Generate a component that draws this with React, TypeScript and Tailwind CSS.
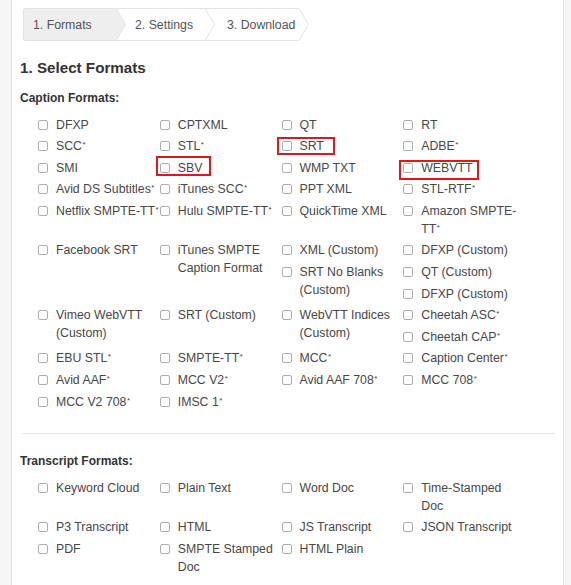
import React from "react";

type Hl = "sbv" | "srt" | "webvtt" | undefined;

const caption: [string, Hl?][] = [
  ["DFXP"], ["CPTXML"], ["QT"], ["RT"],
  ["SCC*"], ["STL*"], ["SRT", "srt"], ["ADBE*"],
  ["SMI"], ["SBV", "sbv"], ["WMP TXT"], ["WEBVTT", "webvtt"],
  ["Avid DS Subtitles*"], ["iTunes SCC*"], ["PPT XML"], ["STL-RTF*"],
  ["Netflix SMPTE-TT*"], ["Hulu SMPTE-TT*"], ["QuickTime XML"], ["Amazon SMPTE-\nTT*"],
  ["Facebook SRT"], ["iTunes SMPTE\nCaption Format"], ["XML (Custom)"], ["DFXP (Custom)"],
  ["SRT No Blanks\n(Custom)"], ["QT (Custom)"], ["DFXP (Custom)"],
  ["Vimeo WebVTT\n(Custom)"], ["SRT (Custom)"], ["WebVTT Indices\n(Custom)"], ["Cheetah ASC*"],
  ["Cheetah CAP*"],
  ["EBU STL*"], ["SMPTE-TT*"], ["MCC*"], ["Caption Center*"],
  ["Avid AAF*"], ["MCC V2*"], ["Avid AAF 708*"], ["MCC 708*"],
  ["MCC V2 708*"], ["IMSC 1*"],
];

const transcript: [string, Hl?][] = [
  ["Keyword Cloud"], ["Plain Text"], ["Word Doc"], ["Time-Stamped\nDoc"],
  ["P3 Transcript"], ["HTML"], ["JS Transcript"], ["JSON Transcript"],
  ["PDF"], ["SMPTE Stamped\nDoc"], ["HTML Plain"],
];

function HighlightBox({ hl }: { hl: Hl }) {
  if (hl === "sbv")
    return <span className="absolute left-[-3.5px] top-[-3px] w-[55px] h-[20px] border-2 border-[#e2161c] pointer-events-none" />;
  if (hl === "srt")
    return <span className="absolute left-[-4.5px] top-[0px] w-[57.5px] h-[18px] border-2 border-[#e2161c] pointer-events-none" />;
  if (hl === "webvtt")
    return <span className="absolute left-[-4px] top-[1.3px] w-[80px] h-[20px] border-2 border-[#e2161c] pointer-events-none" />;
  return null;
}

function Item({ text, hl }: { text: string; hl?: Hl }) {
  const star = text.endsWith("*");
  const body = star ? text.slice(0, -1) : text;
  return (
    <div className="relative float-left w-1/4 mb-[3.6px] flex items-start">
      <span className="mt-[4px] w-[10px] h-[10px] shrink-0 rounded-[2px] border border-[#adadad] bg-white" />
      <span className="ml-[8px] whitespace-pre leading-[18px] text-[12.3px] text-[#474747]">
        {body}
        {star && <span className="relative top-[-3px] ml-[0.5px] text-[8px] leading-[0]">*</span>}
      </span>
      <HighlightBox hl={hl} />
    </div>
  );
}

function Arrow({ fill, last }: { fill: string; last?: boolean }) {
  return (
    <svg width="10" height="33" viewBox="0 0 10 33" className="block shrink-0">
      {!last && <rect x="0" y="0" width="10" height="33" fill="#ffffff" />}
      {!last && <line x1="0" y1="0.5" x2="10" y2="0.5" stroke="#e4e4e4" />}
      {!last && <line x1="0" y1="32.5" x2="10" y2="32.5" stroke="#e4e4e4" />}
      <polygon points="0,0.5 9.5,16.5 0,32.5" fill={fill} />
      <polyline points="0,0.5 9.5,16.5 0,32.5" fill="none" stroke="#e0e0e0" />
    </svg>
  );
}

export default function App() {
  return (
    <div className="h-[585px] overflow-hidden flex bg-[#f6f6f6] font-['Liberation_Sans',Arial,sans-serif]">
      <div className="w-[11px] shrink-0" />
      <div className="w-[553px] shrink-0 bg-white border-x border-[#e3e3e3] pt-[8px] pl-[8px] pr-[8px]">
        {/* breadcrumb */}
        <div className="flex ml-[3px] h-[33px] text-[12.3px] text-[#555]">
          <div className="w-[93px] h-[33px] flex items-center pl-[9px] pt-[1px] bg-[#eeeeee] border border-r-0 border-[#e2e2e2] rounded-l-[3px]">
            1. Formats
          </div>
          <Arrow fill="#eeeeee" />
          <div className="w-[79px] h-[33px] flex items-center pl-[9px] pt-[1px] bg-white border-y border-[#e4e4e4]">
            2. Settings
          </div>
          <Arrow fill="#ffffff" />
          <div className="w-[84px] h-[33px] flex items-center pl-[12px] pt-[1px] bg-white border-y border-[#e4e4e4]">
            3. Download
          </div>
          <Arrow fill="#ffffff" last />
        </div>

        <h1 className="mt-[17px] text-[15.2px] leading-[20px] font-bold text-[#333]">1. Select Formats</h1>

        <h2 className="mt-[12px] text-[12px] leading-[16px] font-bold text-[#333]">Caption Formats:</h2>
        <div className="flow-root mt-[9.5px] ml-[18px] w-[487px]">
          {caption.map(([t, hl], i) => (
            <Item key={i} text={t} hl={hl} />
          ))}
        </div>

        <div className="mt-[19px] ml-[2px] h-px bg-[#e9e9e9]" />

        <h2 className="mt-[19px] text-[12px] leading-[16px] font-bold text-[#333]">Transcript Formats:</h2>
        <div className="flow-root mt-[9.5px] ml-[18px] w-[487px]">
          {transcript.map(([t, hl], i) => (
            <Item key={i} text={t} hl={hl} />
          ))}
        </div>
      </div>
      <div className="flex-1" />
    </div>
  );
}
